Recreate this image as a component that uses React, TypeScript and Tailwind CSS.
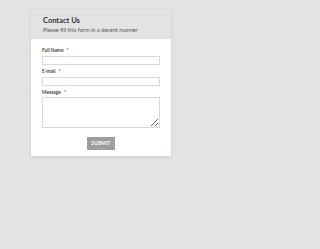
export default function App() {
  return (
    <div
      className="min-h-screen w-full bg-[#e4e3e1]"
      style={{ fontFamily: 'Lato, "Open Sans", sans-serif' }}
    >
      <div className="h-[249px] w-[202px] pt-[9px]">
        <div className="ml-[31px] w-[140px] bg-white shadow-[0_1px_3px_rgba(0,0,0,0.12)]">
          <div className="h-[30px] bg-[#e3e3e3] pl-[12px] pt-[7px]">
            <h1 className="text-[7.5px] leading-[9px] font-bold text-[#333]">Contact Us</h1>
            <p className="mt-[2px] text-[5.6px] leading-[6px] text-[#555]">Please fill this form in a decent manner</p>
          </div>
          <form className="px-[11px] pt-[8px] pb-[6px]">
            <label className="block text-[4.8px] leading-[6px] font-bold text-[#444]">
              Full Name <span className="ml-[2px] text-[#e53935]">*</span>
            </label>
            <input className="mt-[3px] block h-[9px] w-full border border-[#d9d9d9] bg-white outline-none" />
            <label className="mt-[3px] block text-[4.8px] leading-[6px] font-bold text-[#444]">
              E-mail <span className="ml-[2px] text-[#e53935]">*</span>
            </label>
            <input className="mt-[3px] block h-[9px] w-full border border-[#d9d9d9] bg-white outline-none" />
            <label className="mt-[3px] block text-[4.8px] leading-[6px] font-bold text-[#444]">
              Message <span className="ml-[2px] text-[#e53935]">*</span>
            </label>
            <textarea className="mt-[2px] block h-[31px] w-full resize-y border border-[#d9d9d9] bg-white outline-none" />
            <div className="mt-[9px] flex justify-center">
              <button
                type="button"
                className="h-[13px] w-[28px] bg-[#9e9e9e] text-[4.8px] font-bold tracking-[0.2px] text-white"
              >
                SUBMIT
              </button>
            </div>
          </form>
        </div>
      </div>
    </div>
  )
}
